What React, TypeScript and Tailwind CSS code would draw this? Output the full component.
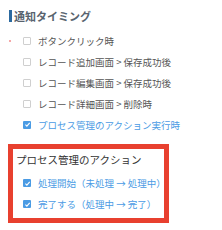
import React from "react";

const font = { fontFamily: '"Noto Sans CJK JP", "Noto Sans", sans-serif' };

function Box({ checked }: { checked?: boolean }) {
  if (checked) {
    return (
      <span className="flex h-[8px] w-[8px] shrink-0 items-center justify-center rounded-[1px] bg-[#4a9be4]">
        <svg width="7" height="7" viewBox="0 0 8 8">
          <path d="M1.6 4.2 L3.3 5.8 L6.5 2.2" fill="none" stroke="#fff" strokeWidth="1.3" />
        </svg>
      </span>
    );
  }
  return <span className="h-[8px] w-[8px] shrink-0 rounded-[1px] border border-[#cfcfcf] bg-white" />;
}

function Row({ label, checked, dot }: { label: string; checked?: boolean; dot?: boolean }) {
  return (
    <div className={`flex h-[21px] items-center ${dot ? "pl-[9px]" : "pl-[23px]"}`}>
      {dot && <span className="mr-[12px] h-[2px] w-[2px] rounded-full bg-[#f28b8b]" />}
      <Box checked={checked} />
      <span className={`ml-[7px] whitespace-nowrap text-[9.5px] leading-[12px] ${checked ? "text-[#4a9be4]" : "text-[#555]"}`}>
        {label}
      </span>
    </div>
  );
}

export default function App() {
  return (
    <div className="h-[230px] w-[222px] overflow-hidden bg-white" style={font}>
      <div className="ml-[9px] mt-[10px] flex h-[12px] items-center border-l-[3px] border-[#2c6aa0] pl-[2px]">
        <span className="text-[11px] font-bold leading-[12px] text-[#58636e]">通知タイミング</span>
      </div>
      <div className="mt-[8px]">
        <Row dot label="ボタンクリック時" />
        <Row label="レコード追加画面 > 保存成功後" />
        <Row label="レコード編集画面 > 保存成功後" />
        <Row label="レコード詳細画面 > 削除時" />
        <Row checked label="プロセス管理のアクション実行時" />
      </div>
      <div className="ml-[8px] mt-[9px] h-[79px] w-[161px] border-[5px] border-[#e8402f] bg-white">
        <div className="flex h-[22px] items-center pl-[3px]">
          <span className="whitespace-nowrap text-[10.5px] leading-[12px] text-[#333]">プロセス管理のアクション</span>
        </div>
        <div className="pt-[1.5px]">
          <div className="flex h-[21px] items-center pl-[10px]">
            <Box checked />
            <span className="ml-[7px] whitespace-nowrap text-[9.5px] leading-[12px] text-[#4a9be4]">処理開始（未処理 → 処理中）</span>
          </div>
          <div className="flex h-[21px] items-center pl-[10px]">
            <Box checked />
            <span className="ml-[7px] whitespace-nowrap text-[9.5px] leading-[12px] text-[#4a9be4]">完了する（処理中 → 完了）</span>
          </div>
        </div>
      </div>
    </div>
  );
}
